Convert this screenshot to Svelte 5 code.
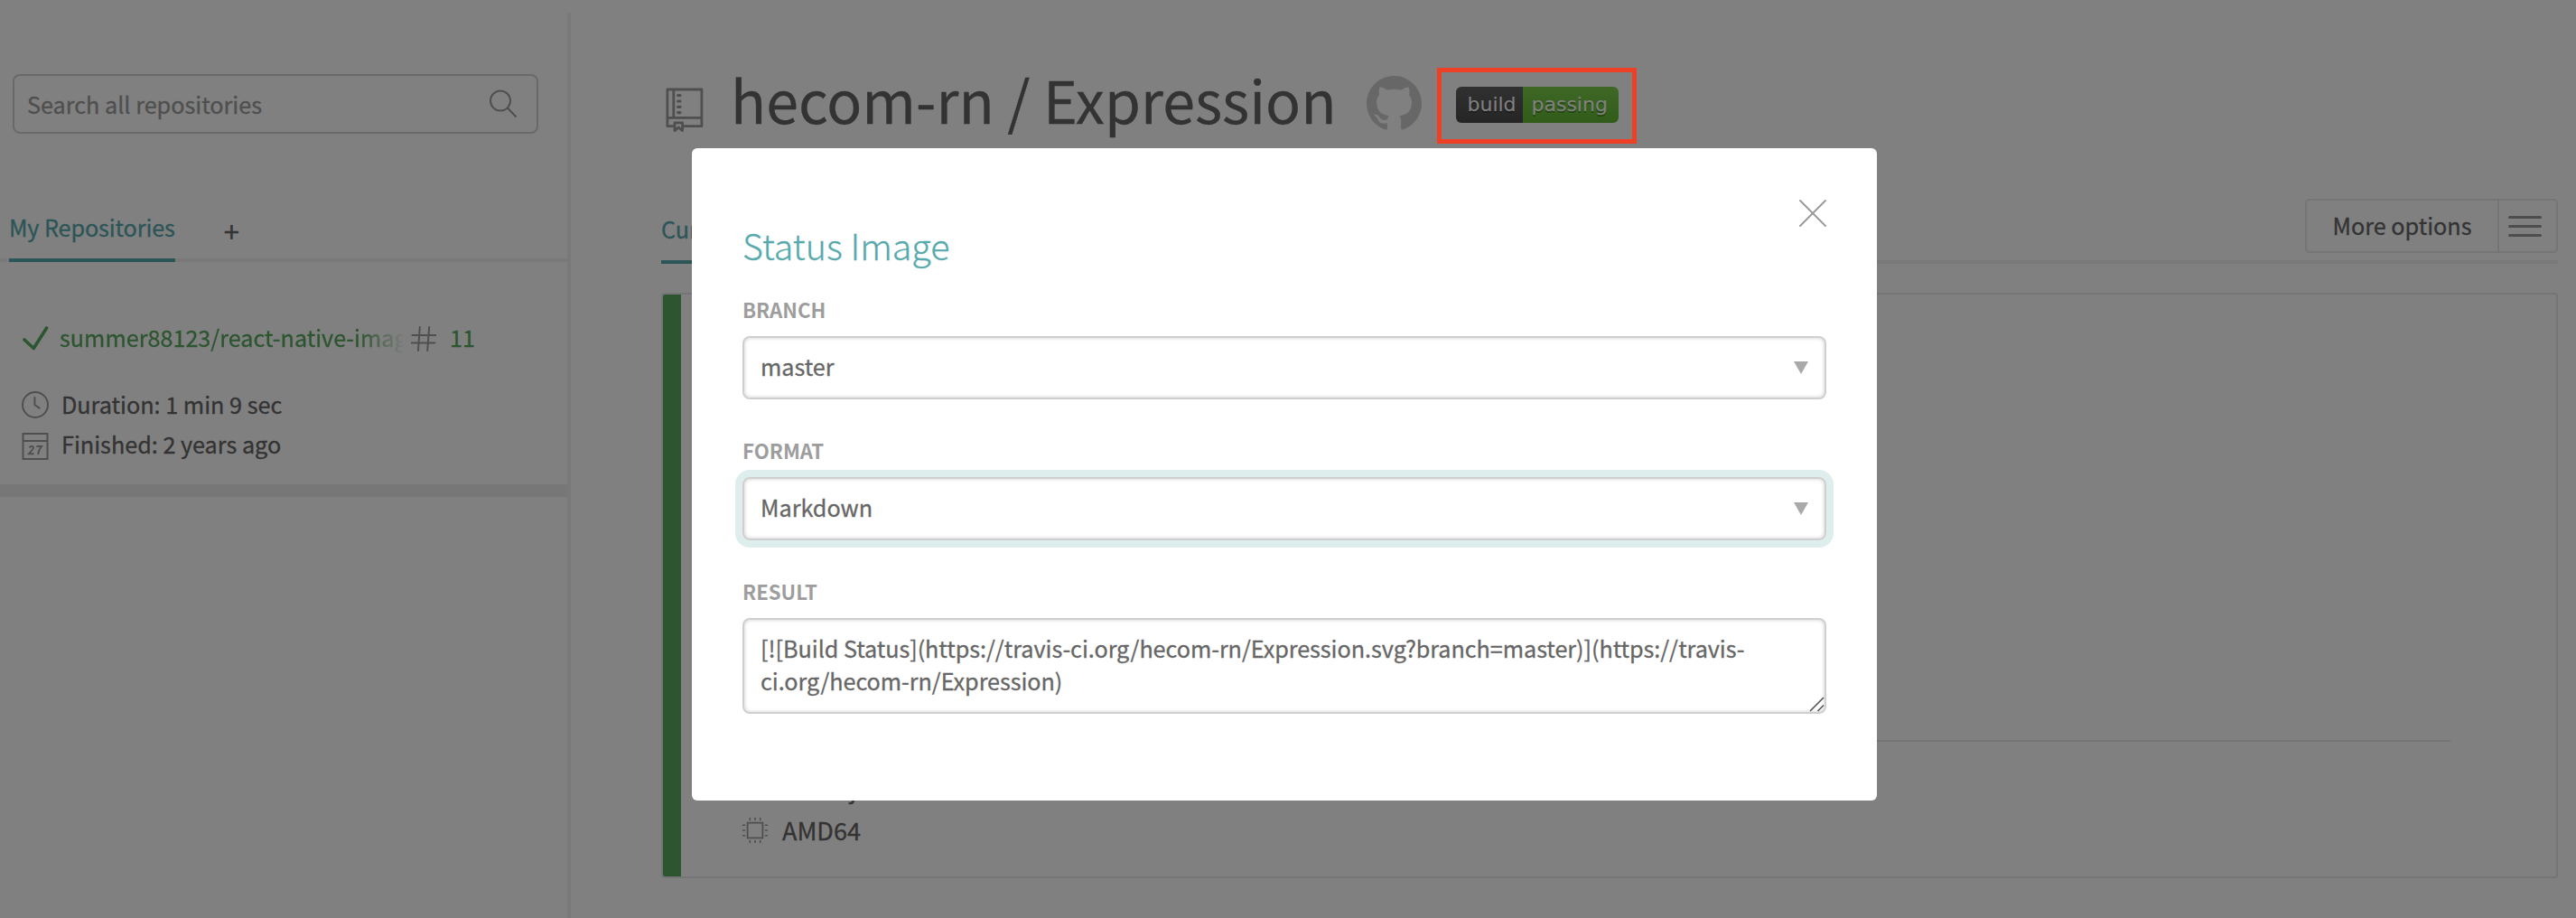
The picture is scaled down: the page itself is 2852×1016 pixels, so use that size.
<script>
  const repo = {
    slug: 'hecom-rn / Expression',
    recent: 'summer88123/react-native-imag',
    build: '11',
    duration: 'Duration: 1 min 9 sec',
    finished: 'Finished: 2 years ago',
  };
  const fields = [
    { label: 'BRANCH', value: 'master', focused: false },
    { label: 'FORMAT', value: 'Markdown', focused: true },
  ];
  const result =
    '[![Build Status](https://travis-ci.org/hecom-rn/Expression.svg?branch=master)](https://travis-\nci.org/hecom-rn/Expression)';
</script>

{#snippet hash()}
  <svg class="hash" width="28" height="28" viewBox="0 0 28 28">
    <path d="M9.8 1 L8 27 M20.2 1 L18.2 27 M1.5 10 H27.5 M.5 18.6 H26.5" fill="none" stroke="#9d9d9d" stroke-width="2" stroke-linecap="round" />
  </svg>
{/snippet}

<div class="page">
  <aside class="sidebar">
    <div class="search">
      <span>Search all repositories</span>
      <svg width="32" height="32" viewBox="0 0 32 32">
        <g fill="none" stroke="#9d9d9d" stroke-width="2" stroke-linecap="round">
          <circle cx="13" cy="12.6" r="11" />
          <path d="M21 20.5 L30 30" />
        </g>
      </svg>
    </div>

    <nav class="side-tabs">
      <span class="tab">My Repositories</span>
      <span class="plus">+</span>
    </nav>

    <div class="repo">
      <div class="repo-title">
        <svg width="30" height="28" viewBox="0 0 30 28">
          <path d="M3 15 L13.3 24.5 L27.6 2" fill="none" stroke="#5aaa60" stroke-width="3.6" stroke-linecap="round" stroke-linejoin="round" />
        </svg>
        <span class="name">{repo.recent}</span>
        {@render hash()}
        <span class="num">{repo.build}</span>
      </div>
      <div class="meta">
        <svg class="clock" width="30" height="30" viewBox="0 0 30 30">
          <g fill="none" stroke="#9d9d9d" stroke-width="2" stroke-linecap="round" stroke-linejoin="round">
            <circle cx="15" cy="15" r="14" />
            <path d="M14.4 7 V15 L19.6 18.6" />
          </g>
        </svg>
        <span>{repo.duration}</span>
      </div>
      <div class="meta">
        <svg class="cal" width="30" height="30" viewBox="0 0 30 30">
          <g fill="none" stroke="#9d9d9d" stroke-width="2">
            <path d="M1.5 1 H28.5 V29 H1.5 Z M1.5 9 H28.5" />
            <path d="M8.4 16.4 Q9.4 14.7 11.4 14.9 Q14 15.4 12.4 18 L8 23.2 H13.6 M16.4 15 H22 Q19 18.5 18 24" stroke-width="1.9" />
          </g>
        </svg>
        <span>{repo.finished}</span>
      </div>
    </div>
    <div class="bar"></div>
  </aside>

  <main class="main">
    <header class="header">
      <svg class="book" width="42" height="50" viewBox="0 0 42 50">
        <g fill="none" stroke="#9d9d9d" stroke-width="2.8" stroke-linejoin="round">
          <path d="M9 42.7 H1.9 V2 H39.9 V42.7 H20 M8.8 2 V33.4 M1.9 33.4 H39.9" />
          <path d="M10 38.8 H18.6 V47.6 L14.3 44 L10 47.6 Z" />
        </g>
        <path d="M13.6 8.6 H16 M13.6 15 H16 M13.6 21.3 H16 M13.6 27.6 H16" stroke="#9d9d9d" stroke-width="3.2" stroke-linecap="round" />
      </svg>
      <h1>{repo.slug}</h1>
      <svg class="octocat" width="61" height="61" viewBox="0 0 16 16">
        <path fill="#cecece" d="M8 0C3.58 0 0 3.58 0 8c0 3.54 2.29 6.53 5.47 7.59.4.07.55-.17.55-.38 0-.19-.01-.82-.01-1.49-2.01.37-2.53-.49-2.69-.94-.09-.23-.48-.94-.82-1.13-.28-.15-.68-.52-.01-.53.63-.01 1.08.58 1.23.82.72 1.21 1.87.87 2.33.66.07-.52.28-.87.51-1.07-1.78-.2-3.64-.89-3.64-3.95 0-.87.31-1.59.82-2.15-.08-.2-.36-1.02.08-2.12 0 0 .67-.21 2.2.82.64-.18 1.32-.27 2-.27s1.36.09 2 .27c1.53-1.04 2.2-.82 2.2-.82.44 1.1.16 1.92.08 2.12.51.56.82 1.27.82 2.15 0 3.07-1.87 3.75-3.65 3.95.29.25.54.73.54 1.48 0 1.07-.01 1.93-.01 2.2 0 .21.15.46.55.38A8.01 8.01 0 0 0 16 8c0-4.42-3.58-8-8-8z" />
      </svg>
      <div class="badge">
        <span class="left">build</span>
        <span class="right">passing</span>
      </div>
    </header>

    <nav class="tabs">
      <span class="tab">Current</span>
      <div class="options">
        <span>More options</span>
        <div class="burger"><i></i><i></i><i></i></div>
      </div>
    </nav>

    <section class="card">
      <div class="stripe"></div>
      <div class="card-body">
        <div class="rule"></div>
        <div class="job">
          {@render hash()}
          <span>Node.js</span>
        </div>
        <div class="arch">
          <svg width="30" height="30" viewBox="0 0 30 30">
            <g fill="none" stroke="#9d9d9d" stroke-width="1.8" stroke-linecap="round">
              <path d="M6.6 6.6 H23.4 V23.4 H6.6 Z" />
              <path stroke-width="1.6" d="M9.3 1.5 V3.5 M15 1.5 V3.5 M20.7 1.5 V3.5 M9.3 26.5 V28.5 M15 26.5 V28.5 M20.7 26.5 V28.5 M1.5 9.3 H3.5 M1.5 15 H3.5 M1.5 20.7 H3.5 M26.5 9.3 H28.5 M26.5 15 H28.5 M26.5 20.7 H28.5" />
            </g>
          </svg>
          <span>AMD64</span>
        </div>
      </div>
    </section>
  </main>
</div>

<div class="overlay">
  <div class="modal">
    <svg class="close" width="32" height="32" viewBox="0 0 32 32">
      <path d="M2 2 L30 30 M30 2 L2 30" stroke="#9b9b9b" stroke-width="2" stroke-linecap="round" />
    </svg>
    <h2>Status Image</h2>
    {#each fields as f}
      <div class="field">
        <span class="label">{f.label}</span>
        <div class="control select" class:focused={f.focused}>
          <span>{f.value}</span>
          <svg width="16" height="14" viewBox="0 0 16 14"><path d="M0 0 H16 L8 14 Z" fill="#a9a9a9" /></svg>
        </div>
      </div>
    {/each}
    <div class="field">
      <span class="label">RESULT</span>
      <div class="control area">
        <span>{result}</span>
        <svg class="grip" width="17" height="17" viewBox="0 0 17 17">
          <path d="M1 16 L16 1 M9.5 16 L16 9.5" stroke="#555" stroke-width="1.6" />
        </svg>
      </div>
    </div>
  </div>
</div>
<div class="highlight"></div>

<style>
  :global(body) {
    background: #fff;
    overflow: hidden;
  }
  .page,
  .overlay {
    font-family: 'Noto Sans CJK SC', 'Noto Sans', sans-serif;
    font-size: 25.2px;
    line-height: 36px;
    color: #666;
    -webkit-text-stroke: 0.3px;
  }
  .page * ,
  .overlay * {
    box-sizing: border-box;
  }
  svg {
    display: block;
    flex: none;
  }
  span {
    white-space: nowrap;
  }
  .page {
    display: flex;
    height: 1016px;
    overflow: hidden;
  }
  .sidebar {
    flex: none;
    width: 632px;
    margin-top: 14px;
    padding-top: 68px;
    border-right: 4px solid #f1f2f2;
  }
  .search {
    display: flex;
    align-items: center;
    justify-content: space-between;
    width: 582px;
    height: 66px;
    margin-left: 14px;
    padding: 0 21px 0 14px;
    border: 2px solid #d2d2d2;
    border-radius: 8px;
    color: #9d9d9d;
  }
  .side-tabs {
    display: flex;
    height: 68px;
    margin-top: 74px;
    padding-left: 10px;
    box-shadow: inset 0 -4px #f1f2f2;
  }
  .tab {
    padding-top: 11px;
    border-bottom: 4px solid #56a9ac;
    color: #56a9ac;
  }
  .side-tabs .tab {
    letter-spacing: -0.1px;
  }
  .plus {
    margin-left: 54px;
    padding-top: 15px;
    font-size: 31px;
  }
  .repo {
    padding: 65px 0 0 24px;
    height: 246px;
  }
  .repo-title {
    display: flex;
    align-items: center;
    margin-bottom: 38px;
    color: #5aaa60;
  }
  .repo-title svg {
    margin-top: 3px;
  }
  .name {
    width: 380px;
    margin-left: 12px;
    mask-image: linear-gradient(to right, #000 330px, transparent 385px);
  }
  .repo-title .hash {
    margin-left: 9px;
  }
  .num {
    margin-left: 15px;
  }
  .meta {
    display: flex;
    align-items: center;
    gap: 14px;
    height: 36px;
    margin-bottom: 8px;
  }
  .clock {
    margin-top: 2px;
  }
  .cal {
    margin-top: 6px;
  }
  .bar {
    height: 14px;
    background: #eee;
  }
  .main {
    flex: 1;
    display: flex;
    flex-direction: column;
    padding: 60px 20px 0 100px;
  }
  .header {
    display: flex;
    align-items: flex-start;
    height: 160px;
  }
  .book {
    margin: 37px 0 0 5px;
  }
  h1 {
    margin: 0 0 0 30px;
    font-size: 64.5px;
    font-weight: 400;
    line-height: 99px;
    white-space: nowrap;
  }
  .octocat {
    margin: 24px 0 0 34px;
  }
  .badge {
    display: flex;
    height: 40px;
    margin: 36px 0 0 38px;
    border-radius: 6px;
    overflow: hidden;
    font: 22px/39px 'DejaVu Sans', sans-serif;
    color: #fff;
    text-shadow: 0 2px rgba(1, 1, 1, 0.3);
    -webkit-text-stroke: 0;
  }
  .left {
    width: 74px;
    padding-left: 12px;
    background: linear-gradient(#616161, #4b4b4b);
  }
  .right {
    width: 106px;
    padding-left: 9px;
    background: linear-gradient(#7ecf4d, #62b632);
  }
  .tabs {
    display: flex;
    justify-content: space-between;
    height: 72px;
    box-shadow: inset 0 -4px #f1f2f2;
  }
  .tabs .tab {
    padding-top: 15px;
  }
  .options {
    display: flex;
    width: 280px;
    height: 60px;
    border: 2px solid #eaeaea;
    border-radius: 5px;
  }
  .options > span {
    width: 213px;
    line-height: 54px;
    text-align: center;
    border-right: 2px solid #eaeaea;
  }
  .burger {
    display: flex;
    flex: 1;
    flex-direction: column;
    gap: 7px;
    padding: 16.5px 16px 0 10px;
  }
  .burger i {
    height: 3px;
    border-radius: 2px;
    background: #9a9a9a;
  }
  .card {
    display: flex;
    height: 648px;
    margin-top: 32px;
    border: 2px solid #eaeaea;
    border-radius: 4px;
  }
  .stripe {
    width: 20px;
    border-radius: 2px 0 0 2px;
    background: #5aaa60;
  }
  .card-body {
    flex: 1;
    padding-top: 493px;
  }
  .rule {
    height: 2px;
    margin: 0 117px 0 100px;
    background: #eaeaea;
  }
  .job,
  .arch {
    display: flex;
    align-items: center;
    font-size: 27px;
  }
  .job {
    margin-top: 34px;
    padding-left: 17px;
    gap: 66px;
  }
  .job .hash {
    margin-top: -2px;
  }
  .arch {
    margin-top: 10px;
    padding-left: 67px;
    gap: 15px;
  }
  .overlay {
    position: absolute;
    inset: 0;
    display: flex;
    align-items: flex-start;
    padding: 164px 0 0 766px;
    background: rgba(0, 0, 0, 0.498);
  }
  .modal {
    position: relative;
    width: 1312px;
    height: 722px;
    padding: 77px 56px 0;
    border-radius: 6px;
    background: #fff;
  }
  .close {
    position: absolute;
    top: 56px;
    right: 55px;
  }
  h2 {
    margin: 0 0 26px;
    font-size: 39.4px;
    font-weight: 300;
    line-height: 60px;
    color: #56a9ac;
  }
  .field {
    display: flex;
    flex-direction: column;
    gap: 15px;
    margin-bottom: 41px;
  }
  .label {
    font-size: 22.2px;
    font-weight: 700;
    line-height: 30px;
    color: #9d9d9d;
    -webkit-text-stroke: 0;
  }
  .control {
    position: relative;
    border: 2px solid #cfcfcf;
    border-radius: 8px;
    box-shadow: inset 0 0 4px #ccc;
  }
  .select {
    display: flex;
    align-items: center;
    justify-content: space-between;
    height: 70px;
    padding: 0 18px 0 18px;
  }
  .select span {
    margin-bottom: 5px;
  }
  .focused {
    box-shadow: inset 0 0 4px #ccc, 0 0 0 8px #deeeed;
  }
  .area {
    height: 106px;
    padding: 13px 17px 13px 18px;
    letter-spacing: -0.05px;
  }
  .area span {
    white-space: pre;
  }
  .grip {
    position: absolute;
    right: 0;
    bottom: 0;
  }
  .highlight {
    position: absolute;
    left: 1591px;
    top: 75px;
    width: 211px;
    height: 74px;
    border: 5px solid #ee4026;
  }
</style>
